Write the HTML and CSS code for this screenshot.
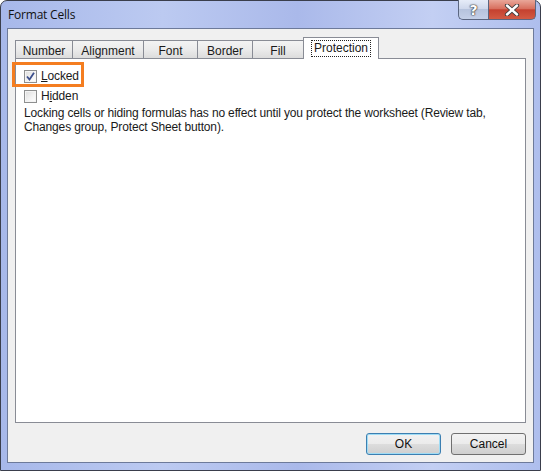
FILE: index.html
```html
<!DOCTYPE html>
<html lang="en">
<head>
  <meta charset="UTF-8" />
  <title>Format Cells</title>
  <link rel="stylesheet" href="styles.css">
</head>
<body>
  <div class="window">
    <div class="titlebar">
      <span class="title">Format Cells</span>
      <div class="caption-buttons">
        <span class="cap-btn help">?</span>
        <span class="cap-btn close">
          <svg width="16" height="12" viewBox="0 0 16 12">
            <path d="M3 1.5 L13 10.5 M13 1.5 L3 10.5" stroke="#3b3b3b" stroke-width="4.2" stroke-linecap="round" fill="none"/>
            <path d="M3 1.5 L13 10.5 M13 1.5 L3 10.5" stroke="#ffffff" stroke-width="2.4" stroke-linecap="round" fill="none"/>
          </svg>
        </span>
      </div>
    </div>

    <div class="client">
      <div class="tabs">
        <span class="tab tab-number">Number</span>
        <span class="tab tab-alignment">Alignment</span>
        <span class="tab tab-font">Font</span>
        <span class="tab tab-border">Border</span>
        <span class="tab tab-fill">Fill</span>
        <span class="tab tab-protection active"><span class="focus">Protection</span></span>
      </div>

      <div class="panel">
        <label class="check-row highlighted">
          <span class="checkbox checked">
            <svg width="9" height="9" viewBox="0 0 9 9">
              <path d="M1 4.5 L3.5 7.5 L8 0.8" stroke="#3c4f8c" stroke-width="1.8" fill="none"/>
            </svg>
          </span>
          <span><u>L</u>ocked</span>
        </label>
        <label class="check-row">
          <span class="checkbox"></span>
          <span>H<u>i</u>dden</span>
        </label>
        <p class="note">Locking cells or hiding formulas has no effect until you protect the worksheet (Review tab, Changes group, Protect Sheet button).</p>
      </div>

      <div class="form-buttons">
        <button type="button" class="default-btn">OK</button>
        <button type="button">Cancel</button>
      </div>
    </div>
  </div>
</body>
</html>
```

FILE: styles.css
```css
* {
  margin: 0;
  padding: 0;
  box-sizing: border-box;
}
body {
  font-family: "Liberation Sans", Arial, sans-serif;
  font-size: 12px;
  color: #1a1a1a;
  background: #ffffff;
  width: 541px;
  height: 471px;
  overflow: hidden;
}
.window {
  width: 541px;
  height: 471px;
  border: 1px solid #3a3e4c;
  border-radius: 7px 7px 0 0;
  background: linear-gradient(90deg, #a7b8ea 0%, #bccaf1 30%, #aab9ea 55%, #c3cff3 80%, #aebeed 100%);
  display: flex;
  flex-direction: column;
}
.titlebar {
  height: 27px;
  display: flex;
  justify-content: space-between;
  align-items: flex-start;
  padding-left: 7px;
  padding-right: 4px;
}
.title {
  font-family: "Open Sans", "Liberation Sans", sans-serif;
  font-size: 12px;
  color: #111;
  line-height: 28px;
  letter-spacing: -0.2px;
}
.caption-buttons {
  display: flex;
  margin-top: -1px;
}
.cap-btn {
  height: 20px;
  display: flex;
  align-items: center;
  justify-content: center;
  border: 1px solid #5b6680;
  border-top: none;
}
.help {
  width: 30px;
  border-radius: 0 0 0 5px;
  border-right: none;
  background: linear-gradient(#e6ecf8 0%, #cfd8ec 45%, #b6c3dd 50%, #c4d0e8 100%);
  font-family: "DejaVu Sans", sans-serif;
  font-weight: bold;
  font-size: 14px;
  color: #fff;
  text-shadow: 0 0 1px #333, 0 0 1px #333, 0 0 2px #444;
}
.close {
  width: 48px;
  border-radius: 0 0 5px 0;
  background: linear-gradient(#e9a799 0%, #d8705f 45%, #c4412f 52%, #d25a43 100%);
}
.client {
  flex: 1;
  margin: 0 6px 7px 6px;
  border: 1px solid #6d7a9a;
  background: #f0f0f0;
  display: flex;
  flex-direction: column;
  padding: 8px 7px 7px 7px;
}
.tabs {
  display: flex;
  align-items: flex-end;
  height: 21px;
  position: relative;
  z-index: 1;
}
.tab {
  height: 18px;
  border: 1px solid #898c95;
  border-bottom: none;
  margin-right: -1px;
  background: linear-gradient(#f3f3f3 0%, #ebebeb 50%, #dcdcdc 100%);
  display: flex;
  align-items: center;
  justify-content: center;
  font-size: 12px;
  padding-top: 2px;
}
.tab-number { width: 58px; }
.tab-alignment { width: 72px; }
.tab-font { width: 55px; }
.tab-border { width: 56px; }
.tab-fill { width: 52px; }
.tab-protection { width: 76px; }
.tab.active {
  height: 22px;
  margin-bottom: -1px;
  background: #ffffff;
  padding-top: 0;
}
.focus {
  outline: 1px dotted #222;
  padding: 0 2px;
  line-height: 15px;
}
.panel {
  flex: 1;
  background: #ffffff;
  border: 1px solid #898c95;
  padding: 7px 8px;
  display: flex;
  flex-direction: column;
  align-items: flex-start;
  letter-spacing: -0.15px;
}
.check-row {
  display: flex;
  align-items: center;
  gap: 4px;
  height: 20px;
  position: relative;
}
.check-row u {
  text-decoration: underline;
  text-underline-offset: 1px;
}
.highlighted::after {
  content: "";
  position: absolute;
  left: -12px;
  right: -5px;
  top: -4px;
  bottom: -1px;
  border: 3px solid #f47d20;
}
.checkbox {
  width: 13px;
  height: 13px;
  border: 1px solid #8e8f8f;
  background: linear-gradient(135deg, #dcdcdc 0%, #f4f4f4 60%, #ffffff 100%);
  box-shadow: inset 0 0 0 1px #f4f4f4;
  display: flex;
  align-items: center;
  justify-content: center;
}
.note {
  margin-top: 0;
  line-height: 14px;
  max-width: 480px;
}
.form-buttons {
  display: flex;
  justify-content: flex-end;
  gap: 10px;
  margin-top: 10px;
}
button {
  width: 75px;
  height: 22px;
  font-family: "Liberation Sans", Arial, sans-serif;
  font-size: 12px;
  color: #111;
  border: 1px solid #707070;
  border-radius: 3px;
  background: linear-gradient(#f2f2f2 0%, #ebebeb 50%, #dddddd 51%, #cfcfcf 100%);
}
button.default-btn {
  border-color: #3c7fb1;
  box-shadow: inset 0 0 0 1px #9fdcf5;
}
```
